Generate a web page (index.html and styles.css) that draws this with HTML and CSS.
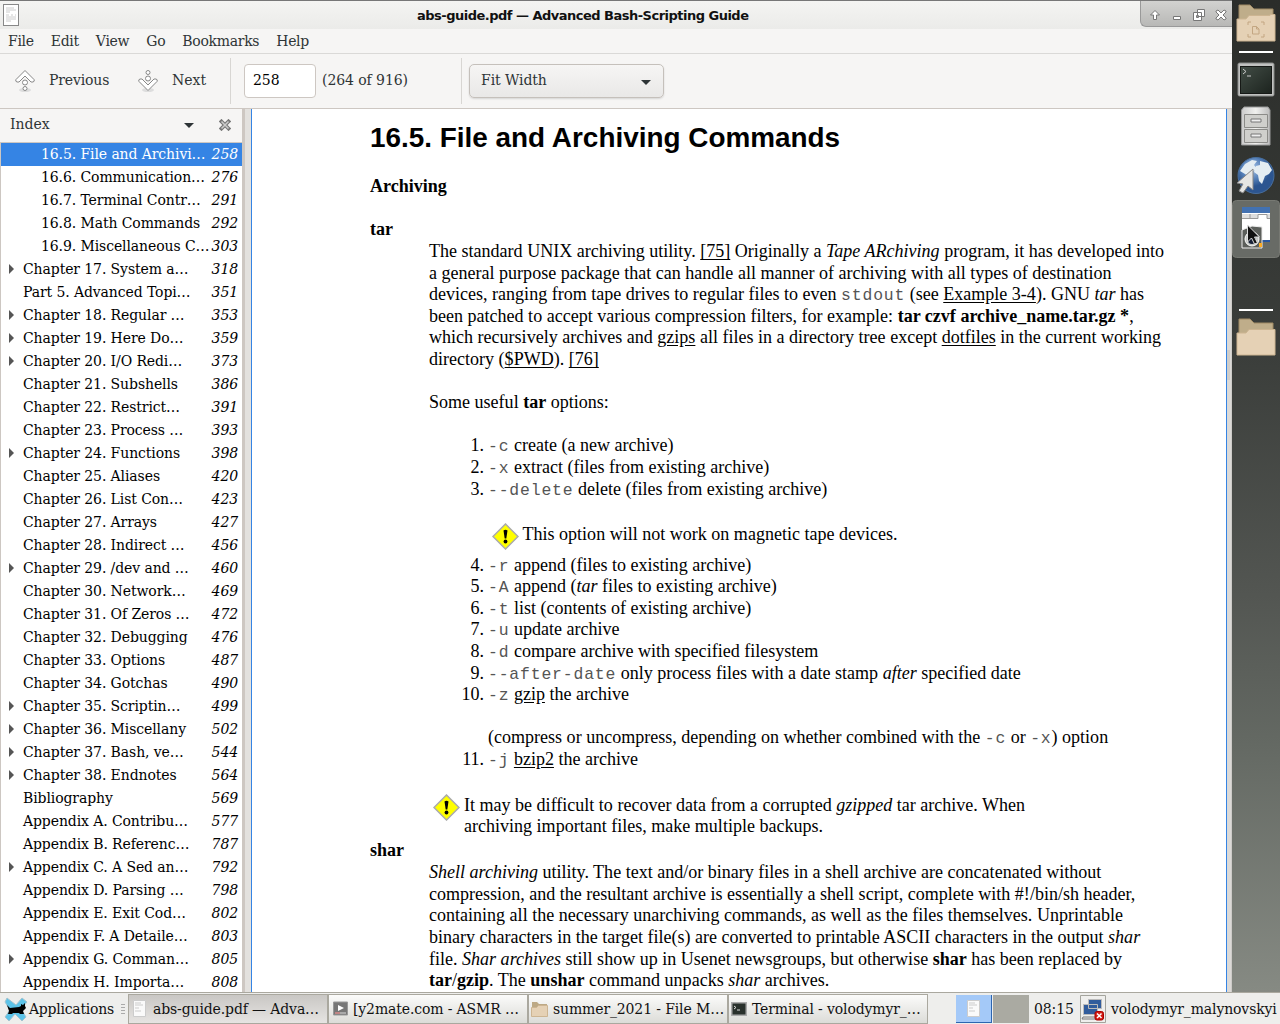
FILE: index.html
```html
<!DOCTYPE html>
<html lang="en">
<head>
<meta charset="utf-8">
<title>abs-guide.pdf — Advanced Bash-Scripting Guide</title>
<link rel="stylesheet" href="styles.css">
</head>
<body>
<div class="desktop">
<main class="window">
  <header class="titlebar">
    <svg class="doc-icon" width="17" height="23" viewBox="0 0 17 23"><rect x=".5" y=".5" width="15" height="21" fill="#fff" stroke="#888"/><path d="M3 4h8M3 6h10M3 8h4M3 11h3M8 11h2M12 11h1M3 13h10M3 15h10M3 17h5" stroke="#ccc"/></svg>
    <h1>abs-guide.pdf — Advanced Bash-Scripting Guide</h1>
    <div class="controls">
      <svg width="92" height="27" viewBox="0 0 92 27"><g fill="#fff" stroke="#777" stroke-linejoin="round"><path d="M15 10.500l4.500 4.500h-3v4.500h-3V15h-3z"/><rect x="33.500" y="16.500" width="7" height="3"/><path d="M57.500 9.500h7v7h-7zM53.500 12.500h8v8h-8z"/><path fill="none" d="M56.500 15.500h2v2h-2z"/><path d="M76 11l2-1 3 3 3-3 2 1v1l-3 3 3 3v1l-2 1-3-3-3 3-2-1v-1l3-3-3-3z"/></g></svg>
    </div>
  </header>
  <nav class="menubar"><span>File</span><span>Edit</span><span>View</span><span>Go</span><span>Bookmarks</span><span>Help</span></nav>
  <div class="toolbar">
    <div class="tool prev"><svg width="22" height="24" viewBox="0 0 22 24"><ellipse cx="11" cy="21" rx="6" ry="2" fill="#ddd"/><g fill="#fff" stroke="#888"><path d="M11 1.500l9 9q1 2-1 2.500h-2l-6-6-6 6H3q-2-.5-1-2.500z"/><circle cx="11" cy="13.500" r="2.500"/><circle cx="11" cy="19.500" r="2"/></g></svg><span>Previous</span></div>
    <div class="tool next"><svg width="22" height="24" viewBox="0 0 22 24"><ellipse cx="11" cy="21" rx="6" ry="2" fill="#ddd"/><g fill="#fff" stroke="#888"><path d="M11 21.500l-9-9Q1 10.500 3 10h2l6 6 6-6h2q2 .5 1 2.500z"/><circle cx="11" cy="9.500" r="2.500"/><circle cx="11" cy="3.500" r="2"/></g></svg><span>Next</span></div>
    <i class="sep"></i>
    <div class="entry">258</div>
    <span class="total">(264 of 916)</span>
    <i class="sep"></i>
    <div class="combo"><span>Fit Width</span><i class="down"></i></div>
  </div>
  <div class="content">
    <aside class="side">
      <div class="side-head"><span>Index</span><i class="down"></i><svg width="12" height="12" viewBox="0 0 12 12"><path d="M2.500 2.500l7 7M9.500 2.500l-7 7" stroke="#777" stroke-width="3.800" stroke-linecap="square"/><path d="M2.500 2.500l7 7M9.500 2.500l-7 7" stroke="#ccc" stroke-width="1.500"/></svg></div>
      <div class="tree">
        <div class="row sub sel"><span>16.5. File and Archivi…</span><em>258</em></div>
        <div class="row sub"><span>16.6. Communication…</span><em>276</em></div>
        <div class="row sub"><span>16.7. Terminal Contr…</span><em>291</em></div>
        <div class="row sub"><span>16.8. Math Commands</span><em>292</em></div>
        <div class="row sub"><span>16.9. Miscellaneous C…</span><em>303</em></div>
        <div class="row more"><span>Chapter 17. System a…</span><em>318</em></div>
        <div class="row"><span>Part 5. Advanced Topi…</span><em>351</em></div>
        <div class="row more"><span>Chapter 18. Regular …</span><em>353</em></div>
        <div class="row more"><span>Chapter 19. Here Do…</span><em>359</em></div>
        <div class="row more"><span>Chapter 20. I/O Redi…</span><em>373</em></div>
        <div class="row"><span>Chapter 21. Subshells</span><em>386</em></div>
        <div class="row"><span>Chapter 22. Restrict…</span><em>391</em></div>
        <div class="row"><span>Chapter 23. Process …</span><em>393</em></div>
        <div class="row more"><span>Chapter 24. Functions</span><em>398</em></div>
        <div class="row"><span>Chapter 25. Aliases</span><em>420</em></div>
        <div class="row"><span>Chapter 26. List Con…</span><em>423</em></div>
        <div class="row"><span>Chapter 27. Arrays</span><em>427</em></div>
        <div class="row"><span>Chapter 28. Indirect …</span><em>456</em></div>
        <div class="row more"><span>Chapter 29. /dev and …</span><em>460</em></div>
        <div class="row"><span>Chapter 30. Network…</span><em>469</em></div>
        <div class="row"><span>Chapter 31. Of Zeros …</span><em>472</em></div>
        <div class="row"><span>Chapter 32. Debugging</span><em>476</em></div>
        <div class="row"><span>Chapter 33. Options</span><em>487</em></div>
        <div class="row"><span>Chapter 34. Gotchas</span><em>490</em></div>
        <div class="row more"><span>Chapter 35. Scriptin…</span><em>499</em></div>
        <div class="row more"><span>Chapter 36. Miscellany</span><em>502</em></div>
        <div class="row more"><span>Chapter 37. Bash, ve…</span><em>544</em></div>
        <div class="row more"><span>Chapter 38. Endnotes</span><em>564</em></div>
        <div class="row"><span>Bibliography</span><em>569</em></div>
        <div class="row"><span>Appendix A. Contribu…</span><em>577</em></div>
        <div class="row"><span>Appendix B. Referenc…</span><em>787</em></div>
        <div class="row more"><span>Appendix C. A Sed an…</span><em>792</em></div>
        <div class="row"><span>Appendix D. Parsing …</span><em>798</em></div>
        <div class="row"><span>Appendix E. Exit Cod…</span><em>802</em></div>
        <div class="row"><span>Appendix F. A Detaile…</span><em>803</em></div>
        <div class="row more"><span>Appendix G. Comman…</span><em>805</em></div>
        <div class="row"><span>Appendix H. Importa…</span><em>808</em></div>
      </div>
    </aside>
    <section class="view">
      <article class="page">
        <h2>16.5. File and Archiving Commands</h2>
        <h3>Archiving</h3>
        <dl>
          <dt>tar</dt>
          <dd>
            <p>The standard UNIX archiving utility. <u>[75]</u> Originally a <i>Tape ARchiving</i> program, it has developed into<br>a general purpose package that can handle all manner of archiving with all types of destination<br>devices, ranging from tape drives to regular files to even <code>stdout</code> (see <u>Example 3-4</u>). GNU <i>tar</i> has<br>been patched to accept various compression filters, for example: <b>tar czvf archive_name.tar.gz *</b>,<br>which recursively archives and <u>gzips</u> all files in a directory tree except <u>dotfiles</u> in the current working<br>directory (<u>$PWD</u>). <u>[76]</u></p>
            <p>Some useful <b>tar</b> options:</p>
            <ol>
              <li><s>1.</s><code>-c</code> create (a new archive)</li>
              <li><s>2.</s><code>-x</code> extract (files from existing archive)</li>
              <li><s>3.</s><code>--delete</code> delete (files from existing archive)</li>
            </ol>
            <div class="note first"><svg width="27" height="27" viewBox="0 0 27 27"><path d="M13.500 1L26 13.500 13.500 26 1 13.500z" fill="#ff0" stroke="#aaa" stroke-width="1.500"/><path d="M11.500 7.500q2-1.500 4 0l-1.200 8h-1.600z"/><circle cx="13.500" cy="18.500" r="1.900"/></svg><span>This option will not work on magnetic tape devices.</span></div>
            <ol>
              <li><s>4.</s><code>-r</code> append (files to existing archive)</li>
              <li><s>5.</s><code>-A</code> append (<i>tar</i> files to existing archive)</li>
              <li><s>6.</s><code>-t</code> list (contents of existing archive)</li>
              <li><s>7.</s><code>-u</code> update archive</li>
              <li><s>8.</s><code>-d</code> compare archive with specified filesystem</li>
              <li><s>9.</s><code>--after-date</code> only process files with a date stamp <i>after</i> specified date</li>
              <li><s>10.</s><code>-z</code> <u>gzip</u> the archive<br><br>(compress or uncompress, depending on whether combined with the <code>-c</code> or <code>-x</code>) option</li>
              <li><s>11.</s><code>-j</code> <u>bzip2</u> the archive</li>
            </ol>
            <div class="note second"><svg width="27" height="27" viewBox="0 0 27 27"><path d="M13.500 1L26 13.500 13.500 26 1 13.500z" fill="#ff0" stroke="#aaa" stroke-width="1.500"/><path d="M11.500 7.500q2-1.500 4 0l-1.200 8h-1.600z"/><circle cx="13.500" cy="18.500" r="1.900"/></svg><span>It may be difficult to recover data from a corrupted <i>gzipped</i> tar archive. When<br>archiving important files, make multiple backups.</span></div>
          </dd>
          <dt>shar</dt>
          <dd><p><i>Shell archiving</i> utility. The text and/or binary files in a shell archive are concatenated without<br>compression, and the resultant archive is essentially a shell script, complete with #!/bin/sh header,<br>containing all the necessary unarchiving commands, as well as the files themselves. Unprintable<br>binary characters in the target file(s) are converted to printable ASCII characters in the output <i>shar</i><br>file. <i>Shar archives</i> still show up in Usenet newsgroups, but otherwise <b>shar</b> has been replaced by<br><b>tar</b>/<b>gzip</b>. The <b>unshar</b> command unpacks <i>shar</i> archives.</p></dd>
        </dl>
      </article>
      <div class="scroll"><i></i></div>
    </section>
  </div>
</main>
<aside class="dock">
  <svg width="48" height="370" viewBox="0 0 48 370">
    <defs>
      <linearGradient id="cab" x2="1"><stop stop-color="#ccc"/><stop offset=".5" stop-color="#f0f0ee"/><stop offset="1" stop-color="#bbb"/></linearGradient>
      <radialGradient id="sea" cx=".4" cy=".3"><stop stop-color="#a9c6ea"/><stop offset=".6" stop-color="#5580b8"/><stop offset="1" stop-color="#2c5590"/></radialGradient>
      <linearGradient id="term" x2="1" y2="1"><stop stop-color="#424d46"/><stop offset="1" stop-color="#1c231e"/></linearGradient>
    </defs>
    <path d="M7 5h11l4 4h19v28H7z" fill="#bfad8a" stroke="#a08a64"/><path d="M5 19h9l3-3.500h21V14.500h5V41H5z" fill="#e5d1b5" stroke="#cdb592"/>
    <g fill="none" stroke="#c3a682"><path d="M20.500 26.500h4l2.500 2.500v5h-6.500zM24.500 26.500v2.500h2.500"/><path d="M16 25v-3h3M29 22h3v3M32 34v3h-3M19 37h-3v-3"/></g>
    <path d="M7 52h34" stroke="#fff" stroke-width="2"/>
    <rect x="6" y="63" width="36" height="33" rx="1.500" fill="#c0c1c0" stroke="#888a88"/><rect x="8.500" y="66.500" width="31" height="27" fill="url(#term)" stroke="#161916"/><path d="M11 69l3 2.500-3 2.500M15 76h4" stroke="#ccc" fill="none"/>
    <path d="M12 107h24l2 3v35H9.500v-35z" fill="url(#cab)" stroke="#999"/><path d="M12.500 114.500h23v13h-23zM12.500 129.500h23v13h-23z" fill="#cfcfcc" stroke="#8b8b88"/><path d="M19 119h10v3H19zM19 134h10v3H19z" fill="#eee" stroke="#777"/>
    <circle cx="24" cy="175.500" r="18" fill="url(#sea)" stroke="#486e9d"/><path d="M8 171l5-7 7-4 5 1-3 4 3 4-6 3-2 5-4-3zM28 161l8 2 4 7-3 4-4 2-3 8-3-3-1-6-4-3 2-6 4-1z" fill="#e4edf2"/><path d="M21 169v21l-5-4-5 7-4-2 4-7-6-1z" fill="#e5e5e3" stroke="#868686"/>
    <rect x=".5" y="200.500" width="47" height="57" rx="4" fill="#686b66" stroke="#777973"/>
    <rect x="10" y="207" width="28" height="34" fill="#fff"/><path d="M10 207h28v6H10z" fill="#4271b1"/><path d="M10 214h28v5H10z" fill="#ddd"/><path d="M26 214.500h9v5h-9z" fill="#fff"/><path d="M10 218.500h16v-4h9v4h3M18 214v4" stroke="#999" fill="none"/><path d="M30 241h8" stroke="#2957a0" stroke-width="2"/>
    <path d="M10 230l10-4 10 1v21H10z" fill="#5c5f5b" stroke="#eee"/><circle cx="20" cy="239" r="7" fill="#c6c9c6" stroke="#fff"/><circle cx="20" cy="240" r="4" fill="#172137"/><path d="M27 243h3v4h-3z" fill="#ffac24"/><path d="M15.500 225v17l4-4 3 6 3-1-3-6h5z" fill="#111" stroke="#ddd"/>
    <path d="M7 310h34" stroke="#fff" stroke-width="2"/>
    <path d="M7 319h11l4 4h19v28H7z" fill="#bfad8a" stroke="#a08a64"/><path d="M5 333h9l3-3.500h26V355H5z" fill="#e5d1b5" stroke="#cdb592"/>
  </svg>
</aside>
<footer class="taskbar">
  <svg class="xfce" width="24" height="24" viewBox="0 0 24 24"><path d="M3 1l9 7 6-7 5 4-6 7 5 8-4 4-7-7-6 7-4-4 5-7-5-8z" fill="#5cc3e8" stroke="#a2c3cf"/><path d="M3 8l3 3 9-1 2-1V7l2 1 2-2v3l1 2-3 3 1 3h-4l-1-1H9l-1 1H4l1-3z"/></svg>
  <span class="apps">Applications</span><i class="grip"></i>
  <div class="task active"><svg width="13" height="17" viewBox="0 0 13 17"><path d="M.5.500h12v16H.5z" fill="#fafafa" stroke="#ccc"/><path d="M2 3h6M2 5h8M2 8h4M2 11h6" stroke="#ccc"/></svg><span>abs-guide.pdf — Adva…</span></div>
  <div class="task"><svg width="15" height="15" viewBox="0 0 15 15"><path d="M.5 1h14v13H.5z" fill="#777" stroke="#999"/><path d="M5 4l6 3-6 3z" fill="#fff"/><path d="M2 12h11" stroke="#ddd"/><path d="M2 12h5" stroke="#d56060"/></svg><span>[y2mate.com - ASMR …</span></div>
  <div class="task folder"><svg width="17" height="16" viewBox="0 0 17 16"><path d="M1 1h5l2 2h8v12H1z" fill="#bda985"/><path d="M.5 6.500h5l2-2h9v11H.5z" fill="#e5d1b5" stroke="#cdb592"/></svg><span>summer_2021 - File M…</span></div>
  <div class="task folder"><svg width="16" height="14" viewBox="0 0 16 14"><path d="M.5.500h15v13H.5z" fill="#29312c" stroke="#aaa" stroke-width="2"/><path d="M3 4l2 1.500L3 7M6 8h3" stroke="#ddd" fill="none"/></svg><span>Terminal - volodymyr_…</span></div>
  <div class="pager"><i><svg width="13" height="17" viewBox="0 0 13 17"><path d="M.5.500h12v16H.5z" fill="#fafafa" stroke="#ccc"/><path d="M2 3h6M2 5h8M2 8h4M2 11h6" stroke="#ccc"/></svg></i><b></b></div>
  <span class="clock">08:15</span>
  <svg class="net" width="26" height="28" viewBox="0 0 26 28"><path d="M.5.500h25v27H.5z" fill="#efefed" stroke="#a4a49d"/><g fill="#315c9c" stroke="#bbb"><path d="M8.500 4.500h13v9h-13zM3.500 9.500h14v10h-14z"/></g><path d="M3 22h14l2 2H2z" fill="#eee" stroke="#777"/><rect x="15" y="16.500" width="8.500" height="8.500" rx="2" fill="#d21b12" stroke="#a00"/><path d="M17 18.500l4.500 4.500M21.500 18.500L17 23" stroke="#fff" stroke-width="1.500"/></svg>
  <span class="user">volodymyr_malynovskyi</span>
</footer>
</div>
</body>
</html>
```
FILE: styles.css
```css
* { box-sizing: border-box; }
body { margin: 0; font: 14px "DejaVu Serif", serif; color: #2e3436; }
svg { display: block; flex: none; }
.desktop { width: 1280px; height: 1024px; overflow: hidden; display: grid; grid-template: 992px 32px / 1232px 48px; background: #fff; white-space: nowrap; }
.window { display: flex; flex-direction: column; min-width: 0; height: 992px; background: #f6f5f4; overflow: hidden; }
.titlebar { height: 29px; flex: none; border-top: 1px solid #777; background: linear-gradient(#f4f4f2, #ebebe9); display: flex; }
.doc-icon { margin: 3px 0 0 3px; }
.titlebar h1 { margin: 0; width: 1120px; padding: 6px 0 0 397px; font: bold 13px/17px "DejaVu Sans", sans-serif; letter-spacing: -.51px; color: #111; }
.controls { width: 92px; height: 26px; background: linear-gradient(#d2d2d0, #b8b8b6); border: solid #999; border-width: 0 0 1px 1px; border-bottom-left-radius: 6px; }
.controls svg { margin: -1px 0 0 -1px; }
.menubar { height: 25px; flex: none; padding: 1px 0 0 8px; display: flex; gap: 17px; line-height: 23px; border-bottom: 1px solid #dad9d7; letter-spacing: -.3px; }
.toolbar { height: 55px; flex: none; border-bottom: 1px solid #cdc7c2; display: flex; align-items: center; letter-spacing: -.08px; }
.toolbar span { margin-top: -2px; }
.tool { display: flex; align-items: center; }
.prev { margin-left: 14px; width: 123px; gap: 13px; letter-spacing: -.15px; }
.next { width: 93px; gap: 13px; letter-spacing: 0; }
.sep { width: 1px; height: 46px; background: #d8d6d3; }
.entry { width: 72px; height: 34px; margin-left: 13px; padding-left: 8px; line-height: 31px; border: 1px solid #cdc7c2; border-radius: 4px; background: #fff; color: #000; }
.total { width: 145px; padding-left: 6px; }
.combo { width: 195px; height: 34px; margin-left: 7px; padding: 0 12px 0 11px; border: 1px solid #c5c0bb; border-radius: 5px; background: linear-gradient(#f6f5f4, #e9e8e7); box-shadow: 0 1px 2px #0002; display: flex; align-items: center; justify-content: space-between; }
.down { border: 5px solid transparent; border-top-color: #2e3436; border-bottom: 0; margin-top: 2px; }
.content { flex: 1; display: flex; min-height: 0; }
.side { width: 245px; border-right: 3px solid #cdc7c2; }
.side-head { height: 34px; padding: 0 11px 3px 10px; display: flex; align-items: center; border-bottom: 1px solid #cdc7c2; }
.side-head span { width: 174px; }
.side-head .down { margin-right: 25px; }
.side-head svg { margin-top: 2px; }
.tree { background: #fff; border-left: 1px solid #cdc7c2; color: #000; letter-spacing: -.1px; }
.row { height: 23px; padding: 0 4px 0 22px; line-height: 22px; display: flex; justify-content: space-between; }
.sub { padding-left: 40px; }
.sel { background: #3584e4; color: #fff; }
.more { padding-left: 8px; }
.more::before { content: ""; border: 5px solid transparent; border-left-color: #555; border-right: 0; margin: 6px 9px 0 0; height: 0; }
.more span { flex: 1; }
.view { flex: 1; display: flex; padding-left: 6px; background: #e3e1de; }
.page { width: 976px; border: solid #3584e4; border-width: 0 1px; background: #fff; color: #000; padding: 12px 0 0 118px; font: 18.04px/21.6px "Liberation Serif", serif; }
.page h2 { margin: 0; font: bold 27.9px/34px "Liberation Sans", sans-serif; }
.page h3 { margin: 21px 0; font-size: inherit; }
dl, dd, p, ol { margin: 0; padding: 0; }
dt { font-weight: bold; }
dd { padding: .8px 0 0 59px; }
p { margin-bottom: 21.6px; }
ol { padding-left: 59px; list-style: none; }
li { display: block; }
s { display: inline-block; width: 59px; margin-left: -59px; padding-right: 4px; text-align: right; text-decoration: none; }
code { font: 16.4px/10px "Liberation Mono", monospace; letter-spacing: .85px; color: #555; }
u { text-underline-offset: 2px; }
.note { display: flex; gap: 4px; }
.note svg { margin: -1px 0 -10px; }
.first { margin: 24.2px 0 8.8px 62.5px; }
.second { margin: 24px 0 2px 4px; }
.scroll { flex: 1; background: #dcdad7; border-right: 1px solid #cdcbc8; padding-top: 241px; }
.scroll i { display: block; width: 3px; height: 30px; background: #cfcdca; }
.dock { background: linear-gradient(#2b2d2a, #3a3d3a 35%, #535652 60%, #646963 75%, #868a83); }
.taskbar { grid-column: 1 / 3; border-top: 1px solid #aaa89f; background: #eeeeec; display: flex; align-items: center; color: #111; letter-spacing: -.13px; }
.xfce { margin-left: 4px; }
.apps { width: 93px; padding-left: 1px; letter-spacing: -.25px; }
.grip { width: 4px; height: 10px; margin-right: 3px; background: repeating-linear-gradient(#aaa 0 1px, transparent 1px 3px); }
.task { width: 200px; height: 30px; border: 1px solid #aaa89f; background: linear-gradient(#fbfbfa, #dcdcd8); display: flex; align-items: center; gap: 7px; padding-left: 4px; }
.task:nth-of-type(2) { gap: 5px; }
.folder { padding-left: 2px; gap: 5px; }
.active { background: linear-gradient(#c9c7c4, #e6e4e2); }
.pager { margin-left: 28px; display: flex; gap: 1px; }
.pager i { width: 36px; height: 28px; background: #a4c9f8; border: solid #2d65b0; border-width: 0 1px 1px 0; display: grid; place-items: center; }
.pager b { width: 36px; height: 28px; background: #aaaaa2; }
.clock { width: 51px; padding-left: 5px; }
.user { padding-left: 5px; }
```
